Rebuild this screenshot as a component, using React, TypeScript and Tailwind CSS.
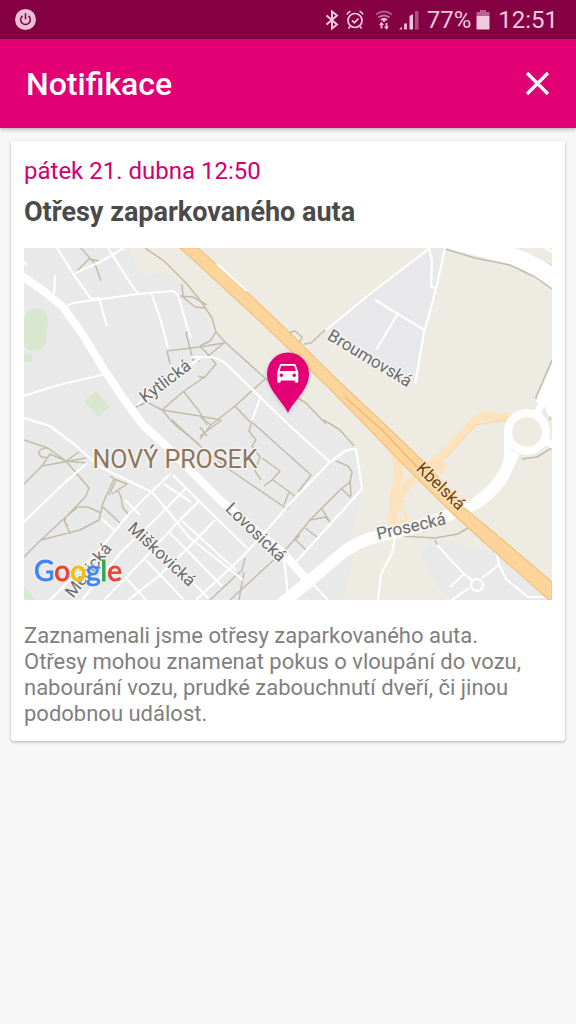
import React from "react";

const streets = [
  // north-west quarter
  "M57 248L72 272L91 299L100 298",
  "M108 248L125 275L138 294",
  "M124 248L100 262L75 273",
  "M65 308Q68 304 74 303L138 294L172 291Q177 292 179 298L186 323L191 338",
  "M152 295L160 318L168 348",
  "M100 300L103 313L107 326",
  "M55 275L54 294",
  "M24 396L55 386L105 374",
  "M24 262L27 265",
  "M137 405L150 394L200 358",
  // Nový Prosek blocks
  "M24 418L50 426L75 445L100 467L152 492",
  "M191 357L208 357Q218 357 226 364L290 426L330 462",
  "M261 396L252 420",
  "M330 462L345 451Q350 449 356 449L362 489L296 562",
  "M330 462L295 498L267 530L243 556L196 600",
  "M24 522L60 487L87 463",
  "M170 474L145 498L128 515L96 554L50 600",
  "M186 488L160 515L123 550L82 600",
  "M200 500L177 523L143 560L104 600",
  "M215 520L191 545L160 575L128 600",
  "M164 484L191 502M152 492L190 538L243 580M173 475L200 502L247 548",
  "M182 521L236 570M170 533L222 586M158 546L208 598M146 560L184 600M126 578L146 600",
  "M102 519L114 530M125 500L140 515",
  "M283 553L286 575L288 600M309 580L328 600",
  // east side
  "M326 330L375 290L430 248",
  "M445 248L437 285L424 333L415 384",
  "M375 300L426 331M397 315L376 350",
  "M429 249L432 260L431 286L436 289",
  "M395 537L392 553L381 574L378 600",
  "M437 545L464 574L472 580M464 574L450 587M482 578L500 564",
  "M496 552L499 564L506 579L528 597L550 597",
  "M469 588L452 600",
];

const paths = [
  "M81 248L95 264L101 281M75 273L89 259L99 261",
  "M145 248L164 261L187 284L200 300L212 318L216 332L226 343L266 379L306 403L326 424",
  "M182 284L183 297L195 307L205 308M180 296L193 297L207 305",
  "M186 333L193 360L200 361M186 333L189 332M167 351L200 347L224 343L208 356M167 351L170 364",
  "M216 332L210 341L200 346M200 347L205 351L216 364L204 378L198 376",
  "M136 407L147 402M147 402L162 410L175 425L200 445M162 410L184 391L206 376M162 410L200 416L220 420M184 392L199 411L207 425",
  "M265 379L235 406L211 425M235 406L250 422M200 417L211 425L200 439",
  "M172 420L200 446L230 470L287 509M200 436L222 420M200 427L207 436",
  "M252 421L249 431L256 440L252 446L260 457L255 471L261 480M253 423L311 475L298 492M262 458L280 471L272 480L264 486M273 480L295 496M289 492L284 505M295 496L287 509",
  "M324 420L340 430L354 446M336 461L348 466L352 472L350 482L340 490L310 520L288 547M350 480L351 496M342 489L351 498M322 509L330 522M311 520L325 517L330 522M305 528L317 537M296 540L306 550M300 535L294 541M288 547L230 600M244 572L239 600M245 558L242 570L210 600",
  "M24 440L48 448L66 461L86 463M42 466L50 454L66 461M42 466L86 458M48 448Q38 448 39 454Q42 459 47 457M79 452L66 461L89 488L86 496L68 515L41 540L24 557",
  "M41 540L80 530L99 520L103 503L114 479L127 484L112 494M68 515L78 507L88 507L101 513M64 519L70 534M103 507L122 525M118 490L121 497L123 508L129 515M66 517Q63 523 68 526",
  "M110 476L116 480L109 495M24 484L42 466",
  "M325 330L311 343L304 344M290 336L291 332L295 331L302 337L300 342L294 343",
  "M445 249L475 258L510 265L535 277L552 289M515 249L535 257L552 266",
  "M552 360L536 397L536 399M552 402L550 420",
  "M400 536L435 538L458 534L468 528M522 459L537 457L552 448M435 540L438 546",
];

function Road({
  d,
  width,
  color = "#ffffff",
}: {
  d: string;
  width: number;
  color?: string;
}) {
  return (
    <path
      d={d}
      fill="none"
      stroke={color}
      strokeWidth={width}
      strokeLinejoin="round"
    />
  );
}

function StreetLabel({
  x,
  y,
  angle,
  size = 17,
  fill = "#6b6b6b",
  halo = "#f4f4f2",
  children,
}: {
  x: number;
  y: number;
  angle: number;
  size?: number;
  fill?: string;
  halo?: string;
  children: React.ReactNode;
}) {
  return (
    <text
      transform={`translate(${x} ${y}) rotate(${angle})`}
      textAnchor="middle"
      dominantBaseline="central"
      fontSize={size}
      fill={fill}
      stroke={halo}
      strokeWidth={3}
      strokeLinejoin="round"
      paintOrder="stroke"
    >
      {children}
    </text>
  );
}

function LocationMap() {
  return (
    <svg
      viewBox="24 248 528 352"
      className="block w-full font-['Roboto',sans-serif]"
      role="img"
      aria-label="Mapa"
    >
      <rect x="24" y="248" width="528" height="352" fill="#e9e9e9" />
      {/* open land */}
      <path
        d="M128 248L137 268L150 275L165 272L182 284L196 300L212 330L226 343L266 379L306 403L326 424L354 447L362 489L357 515L350 535L352 560L343 600H552V248Z"
        fill="#eeebe3"
      />
      <path d="M420 555L434 536L480 550L498 552L552 597V600H452L438 588Z" fill="#e9e9e9" />
      <path d="M327 330L429 248H445L415 385Z" fill="#e8e8ea" />
      {/* parks */}
      <rect x="23" y="308" width="24" height="43" rx="12" fill="#d8e8d0" transform="rotate(6 35 330)" />
      <path d="M24 354H32V362H24Z" fill="#d8e8d0" />
      <path d="M84 401L96 391L110 407L98 417Z" fill="#d8e8d0" />
      <path d="M24 586L36 600H24Z" fill="#d8e8d0" />

      {/* slip roads */}
      <Road
        d="M393 526L394 495L399 475L396 452M400 503Q400 488 416 478M430 466L443 455L473 423Q479 416 488 416L510 418M438 474L443 462"
        width={9}
        color="#fde3bd"
      />
      <Road d="M392 524L400 505L408 520Z" width={3} color="#fde3bd" />
      <Road d="M446 458L476 425L506 420" width={1} color="#f8d3a0" />

      {paths.map((d, i) => (
        <Road key={i} d={d} width={1.5} color="#c1bda8" />
      ))}
      {streets.map((d, i) => (
        <Road key={i} d={d} width={2.2} />
      ))}

      {/* north-east avenue */}
      <path
        d="M447 248H515Q536 255 552 266V288Q535 274 510 264Q480 257 447 248Z"
        fill="#ffffff"
      />
      <path d="M552 364V418Q547 415 545 407L536 401Z" fill="#ffffff" />
      <Road d="M545 248L552 252" width={2} />

      {/* main roads */}
      <Road
        d="M22 276L45 292L63 307L83 335L103 368L123 398L143 425L163 443L187 467L220 500L283 553L309 582"
        width={8}
      />
      <Road
        d="M280 605L307 583L340 555Q358 540 380 536L410 529L442 518L475 504Q498 488 505 472L514 452"
        width={12}
      />
      <circle cx="527" cy="432" r="19" fill="#eeebe3" stroke="#ffffff" strokeWidth="8" />
      <Road d="M507 466L508 435M536 415L548 392M545 441L556 447" width={7} />
      <circle cx="477" cy="585" r="6" fill="#e9e9e9" stroke="#ffffff" strokeWidth="2.4" />

      {/* Kbelská */}
      <path
        d="M180 248H198L247 292L290 333L330 373L397 436L430 468L463 507L497 535L552 582V600H549L495 552L453 514L396 457L370 430L330 389L267 328L200 266Z"
        fill="#fdd59b"
        stroke="#efc283"
        strokeWidth="1.2"
      />
      <Road d="M345 397L382 430L418 468" width={1.4} color="#eab976" />
      <Road d="M217 264L247 291" width={2} />

      <StreetLabel x={370} y={358} angle={31}>Broumovská</StreetLabel>
      <StreetLabel x={165} y={381} angle={-37}>Kytlická</StreetLabel>
      <StreetLabel x={256} y={532} angle={44}>Lovosická</StreetLabel>
      <StreetLabel x={162} y={554} angle={43}>Miškovická</StreetLabel>
      <StreetLabel x={88} y={570} angle={-52}>Mečická</StreetLabel>
      <StreetLabel x={411} y={526} angle={-13}>Prosecká</StreetLabel>
      <StreetLabel x={441} y={486} angle={44} fill="#6f4713" halo="#fde3bd">
        Kbelská
      </StreetLabel>
      <StreetLabel x={175} y={459} angle={0} size={25} fill="#8f765b">
        NOVÝ PROSEK
      </StreetLabel>

      {/* provider logo */}
      <text
        x="34"
        y="581"
        fontSize="28"
        strokeWidth="0.9"
        className="font-['Lato',sans-serif] drop-shadow-[0_0_1px_#ffffff]"
      >
        <tspan fill="#4285f4" stroke="#4285f4">G</tspan>
        <tspan fill="#ea4335" stroke="#ea4335">o</tspan>
        <tspan fill="#fbbc05" stroke="#fbbc05">o</tspan>
        <tspan fill="#4285f4" stroke="#4285f4">g</tspan>
        <tspan fill="#34a853" stroke="#34a853">l</tspan>
        <tspan fill="#ea4335" stroke="#ea4335">e</tspan>
      </text>

      {/* car marker */}
      <g className="drop-shadow-sm">
        <path
          d="M288 413C282 400 267 390 267 373.5A21 21 0 0 1 309 373.5C309 390 294 400 288 413Z"
          fill="#e20074"
        />
      </g>
      <path
        transform="translate(273.7 358.2) scale(1.17)"
        fill="#ffffff"
        d="M18.92 6.01C18.72 5.42 18.16 5 17.5 5h-11c-.66 0-1.21.42-1.42 1.01L3 12v8c0 .55.45 1 1 1h1c.55 0 1-.45 1-1v-1h12v1c0 .55.45 1 1 1h1c.55 0 1-.45 1-1v-8l-2.08-5.99zM6.5 16c-.83 0-1.5-.67-1.5-1.5S5.67 13 6.5 13s1.5.67 1.5 1.5S7.33 16 6.5 16zm11 0c-.83 0-1.5-.67-1.5-1.5s.67-1.5 1.5-1.5 1.5.67 1.5 1.5-.67 1.5-1.5 1.5zM5 11l1.5-4.5h11L19 11H5z"
      />
    </svg>
  );
}

function StatusBar() {
  return (
    <div className="flex h-[39px] items-center justify-between bg-[#850043] pr-[18px] pl-[15px] text-[#efc9dc]">
      <svg viewBox="0 0 21 21" className="size-[21px]" aria-hidden="true">
        <circle cx="10.5" cy="10.5" r="10.5" fill="#e6c0d4" />
        <path d="M7.5 6.9a4.8 4.8 0 1 0 6 0M10.5 4.3v6" fill="none" stroke="#850043" strokeWidth="1.5" />
      </svg>
      <div className="flex items-center">
        <svg viewBox="0 0 14 20" className="mr-[7px] h-5 w-[14px]" fill="none" stroke="currentColor" strokeWidth="2" aria-hidden="true">
          <path d="M1.5 5.5L12 14.5L7 18.5V1.5L12 5.5L1.5 14.5" />
        </svg>
        <svg viewBox="0 0 18 20" className="mr-[11px] h-5 w-[18px]" fill="none" stroke="currentColor" strokeWidth="1.7" aria-hidden="true">
          <circle cx="9" cy="10.5" r="7" />
          <path d="M1 4.5Q2 2 4.5 1.2M17 4.5Q16 2 13.5 1.2M6 10.5L8.5 12.7L12.5 8.5M4 16.5L2.5 18.5M14 16.5L15.5 18.5" />
        </svg>
        <svg viewBox="0 0 18 20" className="mr-[6px] h-5 w-[18px]" fill="none" stroke="currentColor" strokeWidth="1.8" aria-hidden="true">
          <path d="M1 4.5Q9 -1.5 17 4.5" opacity=".45" />
          <path d="M3.5 7.5Q9 3.5 14.5 7.5" opacity=".6" />
          <path d="M6 10Q9 8 12 10" />
          <path d="M9 9.5V12" />
          <path d="M6.5 18.5V14M11.5 13V17.5" />
          <path d="M6.5 11.8L9 15H4ZM11.5 19.7L9 16.5H14Z" fill="currentColor" stroke="none" />
        </svg>
        <svg viewBox="0 0 20 20" className="mr-[8px] size-5" fill="currentColor" aria-hidden="true">
          <path d="M0 19.5L3 16.5V19.5ZM5 13.5H8V19.5H5Z" opacity=".9" />
          <path d="M10.5 6L14 4V19.5H10.5Z" />
          <path d="M16 1H19.5V19.5H16Z" opacity=".4" />
        </svg>
        <span className="text-[24px] leading-[30px]">77%</span>
        <svg viewBox="0 0 14 20" className="mr-[8px] ml-[5px] h-5 w-[14px]" fill="currentColor" aria-hidden="true">
          <path d="M4 0H10V2H13.5V6H.5V2H4Z" opacity=".5" />
          <path d="M.5 6H13.5V19.5H.5Z" />
        </svg>
        <time className="text-[24px] leading-[30px]">12:51</time>
      </div>
    </div>
  );
}

export default function App() {
  return (
    <div className="min-h-screen bg-[#f7f7f7] font-['Roboto',sans-serif]">
      <StatusBar />
      <header className="flex h-[89px] items-center justify-between bg-[#e20074] pr-[25px] pl-[26px] text-white shadow-[0_1px_4px_rgba(0,0,0,0.35)]">
        <h1 className="text-[32px] leading-[40px] font-medium">Notifikace</h1>
        <button type="button" aria-label="Zavřít" className="flex size-[27px] items-center justify-center">
          <svg viewBox="0 0 27 27" className="size-[27px]" aria-hidden="true">
            <path d="M3 3L24 24M24 3L3 24" stroke="currentColor" strokeWidth="3.2" />
          </svg>
        </button>
      </header>
      <main className="px-[11px] pt-[13px]">
        <article className="rounded-[3px] bg-white px-[13px] pt-[14px] pb-[14px] shadow-[0_1px_3px_rgba(0,0,0,0.3)]">
          <time className="block text-[24px] leading-[32px] text-[#d00070]">pátek 21. dubna 12:50</time>
          <h2 className="mt-[8px] text-[27px] leading-[34px] font-bold text-[#4a4a4a]">
            Otřesy zaparkovaného auta
          </h2>
          <div className="mt-[19px]">
            <LocationMap />
          </div>
          <p className="mt-[23px] text-[22px] leading-[26px] text-[#808080]">
            Zaznamenali jsme otřesy zaparkovaného auta.
            <br />
            Otřesy mohou znamenat pokus o vloupání do vozu, nabourání vozu, prudké zabouchnutí dveří, či
            jinou podobnou událost.
          </p>
        </article>
      </main>
    </div>
  );
}
